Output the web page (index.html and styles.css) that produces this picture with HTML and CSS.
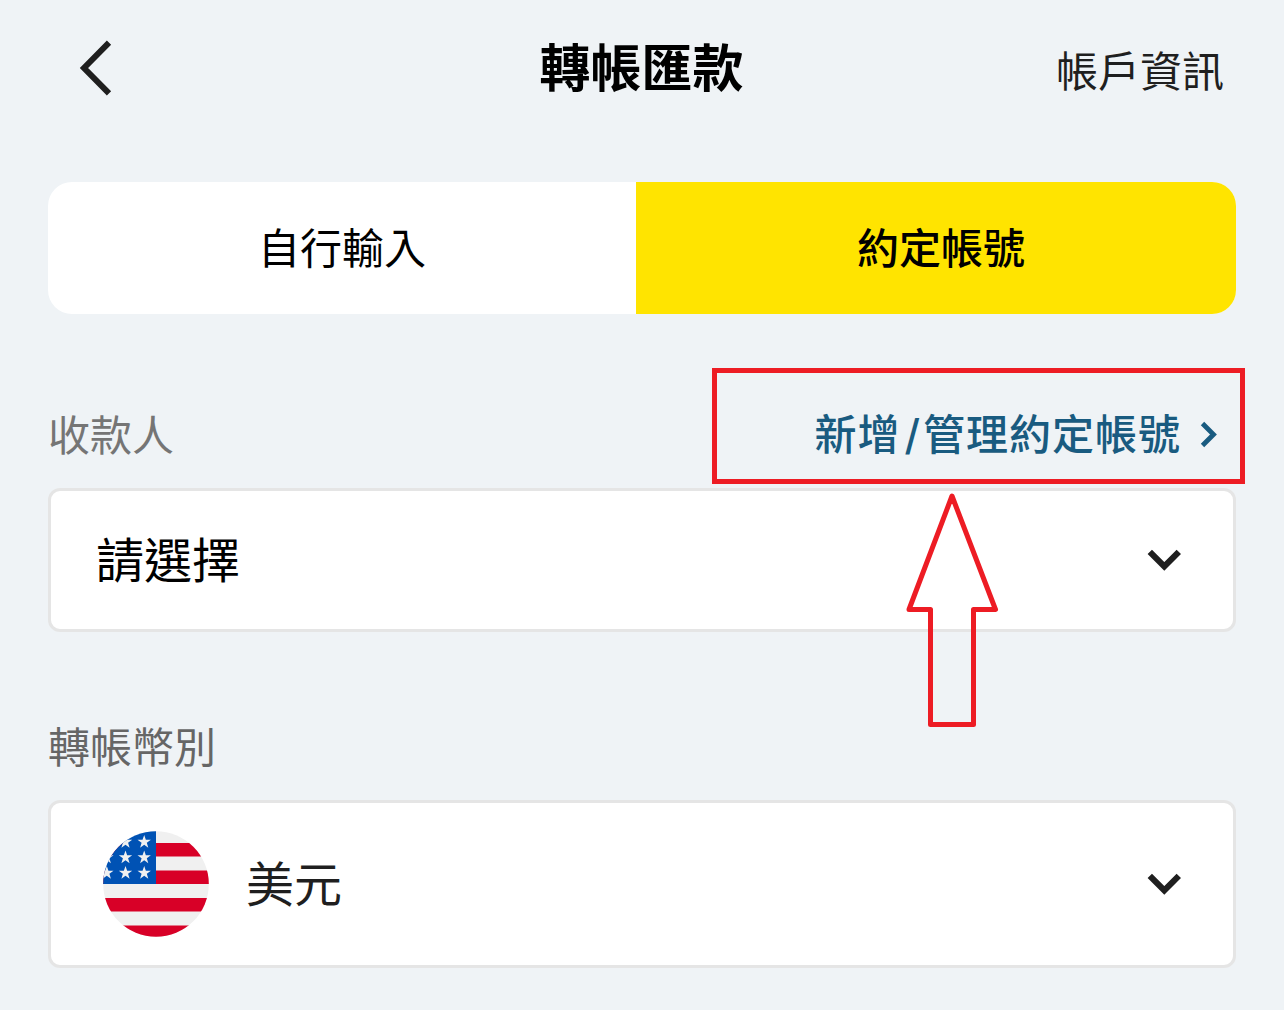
FILE: index.html
```html
<!DOCTYPE html>
<html lang="zh-Hant">

<head>
  <meta charset="UTF-8">
  <meta name="viewport" content="width=device-width, initial-scale=1">
  <title>轉帳匯款</title>
  <link rel="stylesheet" href="styles.css">
</head>

<body>
  <div class="container">
    <header class="header">
      <svg class="back" width="36" height="60" viewBox="0 0 36 60">
        <path d="M33 4.6 L8 30 L33 55.4" />
      </svg>
      <h1 class="title">轉帳匯款</h1>
      <a class="info">帳戶資訊</a>
    </header>

    <div class="tabs">
      <div class="tab">自行輸入</div>
      <div class="tab active">約定帳號</div>
    </div>

    <div class="row payee">
      <span class="label">收款人</span>
      <a class="manage">
        <span class="manage-text">新增<span class="slash">/</span>管理約定帳號</span>
        <svg width="18" height="28" viewBox="0 0 18 28">
          <path d="M2.5 2.5 L13.5 13.5 L2.5 24.5" />
        </svg>
      </a>
    </div>
    <div class="select">
      <span class="placeholder">請選擇</span>
      <svg class="arrow-down" width="36" height="24" viewBox="0 0 36 24">
        <path d="M3.8 3.9 L18.3 18.4 L32.8 3.9" />
      </svg>
    </div>

    <div class="row currency">
      <span class="label dark">轉帳幣別</span>
    </div>
    <div class="select large">
      <svg class="flag" width="106" height="106" viewBox="0 0 106 106">
        <defs>
          <clipPath id="round"><circle cx="53" cy="53" r="52.8" /></clipPath>
          <path id="star" d="M0 -7 L1.65 -2.2 L6.7 -2.2 L2.6 .85 L4.1 5.7 L0 2.8 L-4.1 5.7 L-2.6 .85 L-6.7 -2.2 L-1.65 -2.2 Z" />
        </defs>
        <g clip-path="url(#round)">
          <rect width="106" height="106" fill="#f0f0f0" />
          <g fill="#d80027">
            <rect y="12" width="106" height="13.5" />
            <rect y="39.5" width="106" height="13.5" />
            <rect y="67" width="106" height="13.5" />
            <rect y="94.5" width="106" height="13.5" />
          </g>
          <rect width="53" height="53" fill="#0052b4" />
          <g fill="#f0f0f0">
            <use href="#star" x="22.5" y="11" />
            <use href="#star" x="41.2" y="11" />
            <use href="#star" x="3.8" y="26.5" />
            <use href="#star" x="22.5" y="26.5" />
            <use href="#star" x="41.2" y="26.5" />
            <use href="#star" x="3.8" y="42" />
            <use href="#star" x="22.5" y="42" />
            <use href="#star" x="41.2" y="42" />
          </g>
        </g>
      </svg>
      <span class="value">美元</span>
      <svg class="arrow-down" width="36" height="24" viewBox="0 0 36 24">
        <path d="M3.8 3.9 L18.3 18.4 L32.8 3.9" />
      </svg>
    </div>

    <div class="mark-box"></div>
    <svg class="mark-arrow" width="96" height="240" viewBox="0 0 96 240">
      <path d="M48 6 L91.5 119.5 H69.5 V234.5 H26.5 V119.5 H5 Z" />
    </svg>
  </div>
</body>

</html>
```

FILE: styles.css
```css
* {
  padding: 0;
  margin: 0;
  box-sizing: border-box;
}

body {
  font-family: "Noto Sans CJK TC", sans-serif;
  background: #eff3f6;
  color: #000;
}

svg {
  flex-shrink: 0;
}

svg path {
  stroke-linejoin: miter;
}

.container {
  position: relative;
  width: 1284px;
  height: 1010px;
  padding: 0 48px;
  overflow: hidden;
}

/* header */
.header {
  display: grid;
  grid-template-columns: 1fr auto 1fr;
  align-items: center;
  height: 136px;
  padding: 0 12px 0 28px;
}

.back path {
  fill: none;
  stroke: #1f1f1f;
  stroke-width: 6;
}

.title {
  font-size: 51px;
  line-height: 60px;
  font-weight: bold;
  margin-top: -7px;
  margin-left: -17px;
}

.info {
  justify-self: end;
  margin-top: 2px;
  font-size: 42px;
  line-height: 60px;
  color: #1f1f1f;
}

/* tabs */
.tabs {
  display: flex;
  height: 132px;
  margin-top: 46px;
  border-radius: 24px;
  background: #fff;
  overflow: hidden;
}

.tab {
  width: 588px;
  font-size: 42px;
  line-height: 128px;
  text-align: center;
}

.tab.active {
  width: 600px;
  padding-left: 10px;
  font-weight: 500;
  background: #ffe400;
}

/* form */
.row {
  display: flex;
  justify-content: space-between;
  align-items: center;
  height: 60px;
}

.payee {
  margin-top: 91px;
  margin-bottom: 23px;
}

.currency {
  margin-top: 85px;
  margin-bottom: 23px;
}

.label {
  margin-top: -5px;
  font-size: 42px;
  line-height: 60px;
  color: #757575;
}

.label.dark {
  color: #666;
}

.manage {
  display: flex;
  align-items: center;
  gap: 19px;
  margin-right: 18px;
  font-size: 42px;
  line-height: 60px;
  letter-spacing: 1px;
  font-weight: 500;
  color: #195b80;
}

.manage-text {
  margin-top: -4px;
}

.slash {
  padding: 0 2px 0 4px;
  font-family: Inter, sans-serif;
}

.manage path {
  fill: none;
  stroke: #195b80;
  stroke-width: 4.8;
}

.select {
  display: flex;
  align-items: center;
  height: 144px;
  padding: 0 51px 0 45px;
  border: 3px solid #e5e5e5;
  border-radius: 12px;
  background: #fff;
  font-size: 48px;
}

.select.large {
  height: 168px;
  padding-left: 52px;
}

.placeholder,
.value {
  margin-top: -7px;
}

.value {
  margin-left: 37px;
  color: #1f1f1f;
}

.arrow-down {
  margin-left: auto;
}

.arrow-down path {
  fill: none;
  stroke: #1f1f1f;
  stroke-width: 6.2;
}

/* red marks drawn over the form */
.mark-box {
  position: absolute;
  left: 712px;
  top: 368px;
  width: 533px;
  height: 116px;
  border: 5px solid #ed1c24;
}

.mark-arrow {
  position: absolute;
  left: 904px;
  top: 490px;
}

.mark-arrow path {
  fill: none;
  stroke: #ed1c24;
  stroke-width: 5;
  stroke-linejoin: round;
}
```
